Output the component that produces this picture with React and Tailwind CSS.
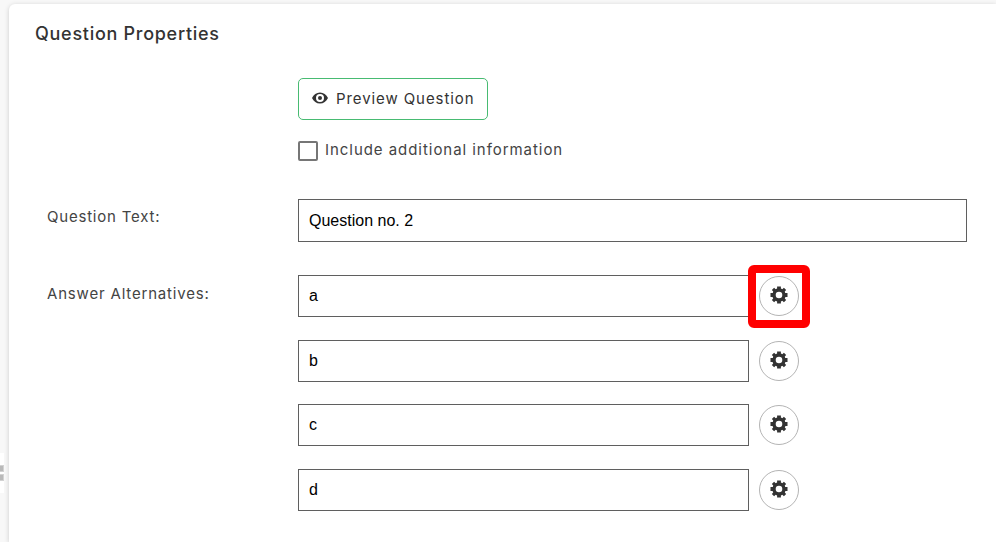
import { useState } from 'react';

const TEETH = [0, 45, 90, 135];

function GearIcon() {
  return (
    <svg className="w-[18px] h-[18px] -mt-[1.5px] -ml-px" viewBox="0 0 18 18" fill="none" stroke="#333333">
      <circle cx="9" cy="9" r="5" strokeWidth="3.4" />
      {TEETH.map((deg) => (
        <g key={deg} transform={`rotate(${deg} 9 9)`} strokeWidth={deg % 90 ? 3.2 : 3.8}>
          <path d="M9 .5v3.2M9 14.3v3.2" />
        </g>
      ))}
    </svg>
  );
}

function EyeIcon() {
  return (
    <svg className="w-4 h-3 -mt-[3px]" viewBox="0 0 16 12" fill="none">
      <path
        fill="#333333"
        fillRule="evenodd"
        d="M8 .4C4.4.4 1.6 2.6 0 6c1.6 3.4 4.4 5.6 8 5.6s6.4-2.2 8-5.6C14.4 2.6 11.6.4 8 .4ZM8 2a4 4 0 1 1 0 8a4 4 0 0 1 0-8Z"
      />
      <circle cx="8" cy="6" r="2" fill="#333333" />
    </svg>
  );
}

function FieldLabel({ children }) {
  return <div className="w-[251px] shrink-0 text-[15px] leading-5 text-[#444444]">{children}</div>;
}

function TextInput({ className, ...props }) {
  return (
    <input
      className={`border border-[#5f5f5f] bg-white px-2.5 font-['Liberation_Sans',Arial,sans-serif] text-base tracking-normal text-black outline-none ${className}`}
      {...props}
    />
  );
}

export default function App() {
  const [question, setQuestion] = useState('Question no. 2');
  const [answers, setAnswers] = useState(['a', 'b', 'c', 'd']);

  const updateAnswer = (index, value) => {
    setAnswers(answers.map((a, i) => (i === index ? value : a)));
  };

  return (
    <div className="flex h-screen w-screen overflow-hidden bg-[#f8f8f8] pt-1 font-['Inter',sans-serif]">
      {/* Side handle */}
      <div className="w-[9px] shrink-0 pt-[449px]">
        <div className="flex h-10 w-1 flex-col items-start gap-0.5 bg-white pt-3">
          <div className="h-[7px] w-1 border-y border-r border-[#d2d2d2] bg-[#b9b9b9]" />
          <div className="h-[7px] w-1 border-y border-r border-[#d2d2d2] bg-[#b9b9b9]" />
        </div>
      </div>

      <main className="flex-1 rounded-tl-md bg-white pl-[26px] pt-[18px] shadow-[0_1px_5px_rgba(0,0,0,0.18)]">
        <h1 className="text-lg leading-6 font-medium tracking-[0.72px] text-[#333333]">Question Properties</h1>

        <div className="pl-3">
          <div className="pt-8 pl-[251px]">
            <button className="flex h-[42px] w-[190px] items-center rounded-[5px] border border-[#48bb72] pl-[13px] text-[15px] text-[#333333]">
              <EyeIcon />
              <span className="ml-2 tracking-[0.91px] whitespace-nowrap">Preview Question</span>
            </button>
            <label className="mt-[21px] flex h-5 items-center">
              <input type="checkbox" className="size-5 appearance-none rounded-xs border-2 border-[#767676] bg-white" />
              <span className="-mt-0.5 ml-[7px] text-[15px] tracking-[0.95px] whitespace-nowrap text-[#444444]">
                Include additional information
              </span>
            </label>
          </div>

          <div className="mt-[38px] flex">
            <FieldLabel>
              <span className="block pt-2 tracking-[0.79px]">Question Text:</span>
            </FieldLabel>
            <TextInput className="h-[43px] w-[669px]" value={question} onChange={(e) => setQuestion(e.target.value)} />
          </div>

          <div className="mt-[33px] flex">
            <FieldLabel>
              <span className="block pt-[9px] tracking-[0.82px]">Answer Alternatives:</span>
            </FieldLabel>
            <div className="flex flex-col gap-[22.6px]">
              {answers.map((answer, i) => (
                <div key={i} className="flex h-[42px] items-center gap-2.5">
                  <TextInput className="h-full w-[451px]" value={answer} onChange={(e) => updateAnswer(i, e.target.value)} />
                  <button className="relative flex size-10 items-center justify-center rounded-full border border-[#b4b4b4]">
                    <GearIcon />
                    {/* Highlight around the first settings button */}
                    {i === 0 && (
                      <span className="pointer-events-none absolute -inset-x-3 -top-3 -bottom-[13px] rounded-md border-8 border-[#ff0000]" />
                    )}
                  </button>
                </div>
              ))}
            </div>
          </div>
        </div>
      </main>
    </div>
  );
}
